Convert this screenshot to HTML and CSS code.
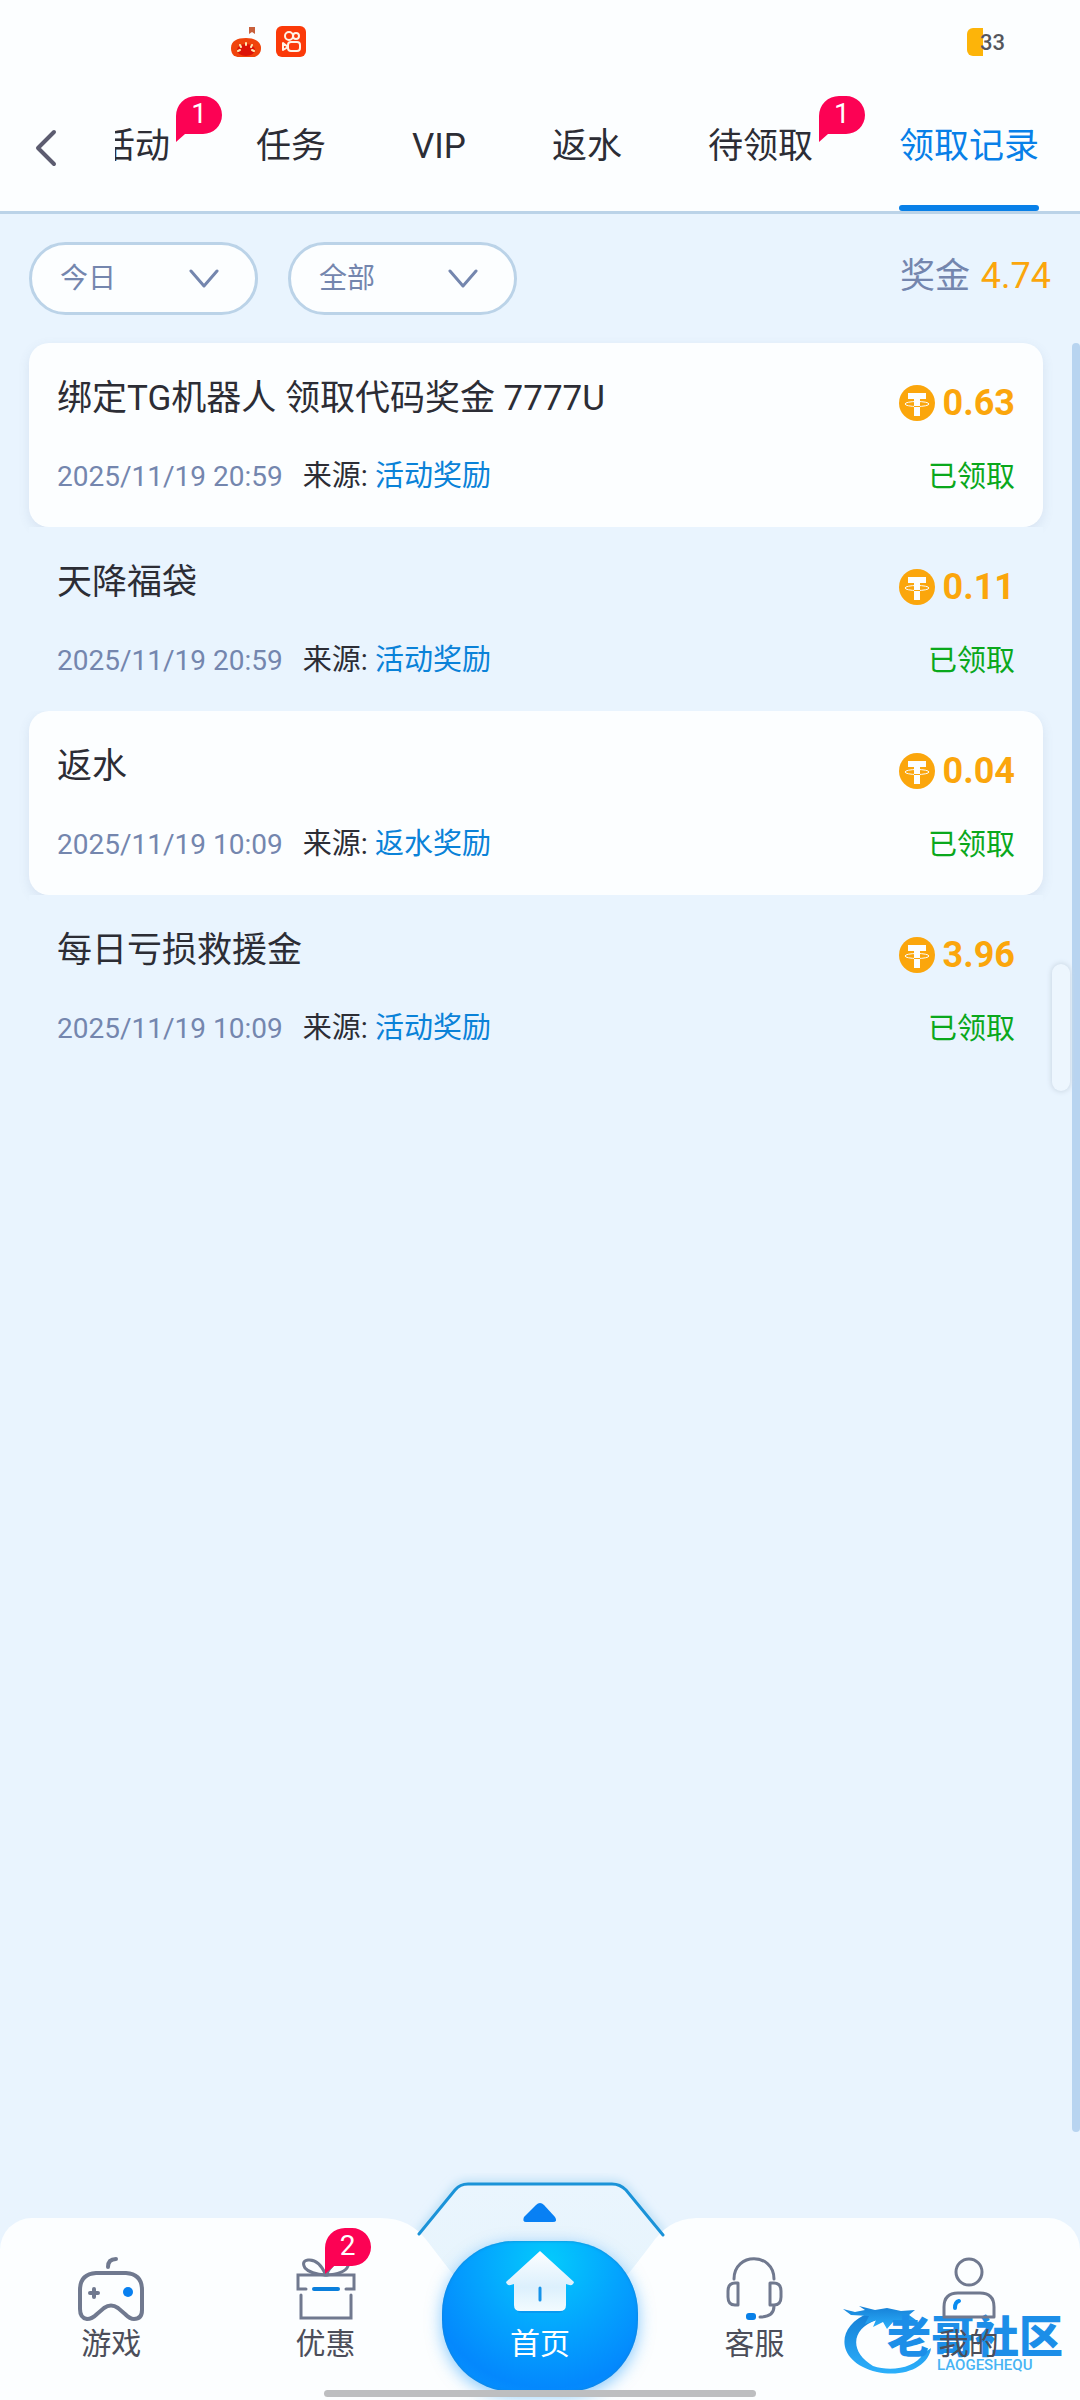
FILE: index.html
```html
<!DOCTYPE html>
<html lang="zh-CN">
<head>
<meta charset="utf-8">
<meta name="viewport" content="width=device-width, initial-scale=1">
<title>领取记录</title>
<link rel="stylesheet" href="styles.css">
</head>
<body>
<svg class="defs" width="0" height="0" aria-hidden="true">
  <symbol id="coin" viewBox="0 0 36 36">
    <circle cx="18" cy="18" r="18" fill="#fba60c"/>
    <path d="M9 8h18v6h-6v17h-6V14H9z" fill="#fcfeff"/>
    <ellipse cx="18" cy="19" rx="12" ry="2.500" fill="none" stroke="#fcfeff" stroke-width="1"/>
    <path d="M15 21.500h6" stroke="#fba60c" stroke-width="1"/>
  </symbol>
  <symbol id="chevron" viewBox="0 0 30 20">
    <path d="M2 2l13 15L28 2" fill="none" stroke="#7486ae" stroke-width="3" stroke-linecap="round" stroke-linejoin="round"/>
  </symbol>
  <symbol id="bubble" viewBox="0 0 46 46">
    <path d="M0 46V20A20 20 0 0 1 20 0h7a19 19 0 0 1 0 38H9z" fill="#fc0254"/>
  </symbol>
</svg>

<header class="header">
  <div class="status">
    <div class="status-apps">
      <svg width="30" height="32" viewBox="0 0 30 32" aria-hidden="true">
        <path d="M18 1h6v7l-3-2-3 2z" fill="#c8603c"/>
        <path d="M15 12c9 0 15 4 15 10s-4 9-8 9H8c-4 0-8-2-8-9s6-10 15-10z" fill="#f0440c"/>
        <ellipse cx="15" cy="24" rx="9" ry="6" fill="#dc1408"/>
        <path d="M15 17v2M9 19l1 2M21 19l-1 2M7 25l2-1M23 25l-2-1" stroke="#ffe9b0" stroke-width="2" stroke-linecap="round"/>
      </svg>
      <svg width="30" height="32" viewBox="0 0 30 32" aria-hidden="true">
        <rect width="30" height="31" rx="6" fill="#fb3a09"/>
        <g fill="none" stroke="#fff3e6" stroke-width="2" stroke-linejoin="round">
          <circle cx="13" cy="10" r="4"/><circle cx="20" cy="10" r="3"/>
          <rect x="12" y="16" width="12" height="9" rx="3"/><path d="M7 17v7l5-3z"/>
        </g>
      </svg>
    </div>
    <div class="battery"><span class="battery-level"></span><span class="battery-text">33</span></div>
  </div>
  <div class="topbar">
    <button class="back" aria-label="返回">
      <svg width="22" height="38" viewBox="0 0 22 38"><path d="M19 3L3 19l16 16" fill="none" stroke="#5c5c70" stroke-width="4" stroke-linecap="round" stroke-linejoin="round"/></svg>
    </button>
    <nav class="tabs">
      <a class="tab" href="#activity">活动<span class="badge"><svg><use href="#bubble"/></svg><b>1</b></span></a>
      <a class="tab" href="#task">任务</a>
      <a class="tab" href="#vip">VIP</a>
      <a class="tab" href="#rebate">返水</a>
      <a class="tab" href="#pending">待领取<span class="badge"><svg><use href="#bubble"/></svg><b>1</b></span></a>
      <a class="tab tab-active" href="#records" aria-current="page">领取记录</a>
    </nav>
  </div>
</header>

<main class="main">
  <div class="filters">
    <div class="select">
      <select aria-label="日期"><option>今日</option></select>
      <svg><use href="#chevron"/></svg>
    </div>
    <div class="select">
      <select aria-label="类型"><option>全部</option></select>
      <svg><use href="#chevron"/></svg>
    </div>
    <p class="total">奖金 <span>4.74</span></p>
  </div>

  <div class="scroller">
    <ul class="records">
      <li class="record">
        <div class="row"><h2>绑定TG机器人 领取代码奖金 7777U</h2><span class="amount"><svg><use href="#coin"/></svg>0.63</span></div>
        <div class="row meta"><p><time>2025/11/19 20:59</time><span>来源: <em>活动奖励</em></span></p><span class="state">已领取</span></div>
      </li>
      <li class="record">
        <div class="row"><h2>天降福袋</h2><span class="amount"><svg><use href="#coin"/></svg>0.11</span></div>
        <div class="row meta"><p><time>2025/11/19 20:59</time><span>来源: <em>活动奖励</em></span></p><span class="state">已领取</span></div>
      </li>
      <li class="record">
        <div class="row"><h2>返水</h2><span class="amount"><svg><use href="#coin"/></svg>0.04</span></div>
        <div class="row meta"><p><time>2025/11/19 10:09</time><span>来源: <em>返水奖励</em></span></p><span class="state">已领取</span></div>
      </li>
      <li class="record">
        <div class="row"><h2>每日亏损救援金</h2><span class="amount"><svg><use href="#coin"/></svg>3.96</span></div>
        <div class="row meta"><p><time>2025/11/19 10:09</time><span>来源: <em>活动奖励</em></span></p><span class="state">已领取</span></div>
      </li>
    </ul>
    <div class="scrollbar"></div>
    <div class="handle"></div>
  </div>
</main>

<footer class="footer">
  <div class="dock-bg" aria-hidden="true">
    <div class="dock-side dock-left"></div>
    <svg class="dock-notch" width="320" height="220" viewBox="0 0 320 220">
      <defs>
        <linearGradient id="hex" x1="0" y1="0" x2="0" y2="1"><stop offset="0" stop-color="#eaf5fe"/><stop offset="1" stop-color="#e5f4fb"/></linearGradient>
        <filter id="glow" x="-20%" y="-20%" width="140%" height="140%"><feGaussianBlur stdDeviation="5"/></filter>
      </defs>
      <path d="M39 55L75 10Q80 4 88 4H232Q240 4 246 10L283 55" fill="none" stroke="#b5dcf4" stroke-width="7" filter="url(#glow)"/>
      <path d="M39 55L75 10Q80 4 88 4H232Q240 4 246 10L283 55V160H39z" fill="url(#hex)"/>
      <path d="M0 38C22 38 36 46 48 62L68 88Q100 130 160 130T253 88L273 62C285 46 298 38 320 38V220H0z" fill="#fcfeff"/>
      <path d="M39 54L75 10Q80 4 88 4H232Q240 4 246 10L283 55" fill="none" stroke="#1b93d8" stroke-width="3" stroke-linecap="round"/>
      <path d="M144 37L156 25Q160 21 164 25L175 37Q178 42 173 42H146Q142 42 144 37z" fill="#0880f4"/>
    </svg>
    <div class="dock-side dock-right"></div>
  </div>
  <div class="watermark">
    <svg width="92" height="76" viewBox="0 0 92 76" aria-hidden="true">
      <defs><linearGradient id="drg" x1="0" y1="0" x2="0" y2="1"><stop offset="0" stop-color="#157fd6"/><stop offset="1" stop-color="#2cb0fb"/></linearGradient></defs>
      <path d="M26 13C-8 26-8 62 34 72C62 78 86 66 88 48L80 54C72 68 48 72 30 66C6 52 8 28 34 20z" fill="url(#drg)"/>
      <path d="M0 9L12 12L22 10L16 6L32 10L44 8L58 11L72 10L66 15L73 20L58 20L62 25L50 22L44 29L40 22L30 27L33 20L22 24L26 16L8 15z" fill="url(#drg)"/>
    </svg>
    <div class="watermark-text"><strong>老哥社区</strong><small>LAOGESHEQU</small></div>
  </div>
  <nav class="dock">
    <a class="dock-item" href="#games">
      <svg width="68" height="66" viewBox="0 0 68 66" fill="none" stroke="#70798f" stroke-width="4" stroke-linecap="round" stroke-linejoin="round">
        <path d="M31 11Q31 3 39 3"/>
        <path d="M19 17H49Q65 18 65 34V54Q65 63 57 63Q53 63 48 58L41 52Q34 47 27 52L20 58Q15 63 10 63Q3 62 3 53V34Q3 18 19 17z"/>
        <path d="M13 37h8M17 33v8"/><circle cx="51" cy="36" r="5" fill="#0880f0" stroke="none"/>
      </svg>
      <span>游戏</span>
    </a>
    <a class="dock-item" href="#promos">
      <svg width="68" height="66" viewBox="0 0 68 66" fill="none" stroke="#70798f" stroke-width="3">
        <path d="M34 19C30 10 24 3 16 4Q9 5 13 12Q18 18 34 19zM34 19Q53 18 56 10Q57 5 52 4Q42 3 34 19z"/>
        <path d="M14 33H6V19H62V33H54M9 39V62H59V39" stroke-linecap="round"/>
        <path d="M22 33H46" stroke="#0a7fdc" stroke-width="4" stroke-linecap="round"/>
      </svg>
      <span>优惠</span>
      <span class="badge dock-badge"><svg><use href="#bubble"/></svg><b>2</b></span>
    </a>
    <a class="dock-home" href="#home">
      <svg width="72" height="68" viewBox="0 0 72 68">
        <defs><linearGradient id="house" x1="0" y1="0" x2="0" y2="1"><stop offset="0" stop-color="#fcfeff"/><stop offset=".6" stop-color="#dcf0fd"/><stop offset="1" stop-color="#f2fbff"/></linearGradient></defs>
        <path d="M11 36V56Q11 65 18 65H54Q61 65 61 56V36z" fill="#0a7ae0" opacity=".4"/>
        <path d="M36 3L70 34Q69 39 62 36V57Q62 63 56 63H16Q10 63 10 57V36Q3 39 2 34z" fill="url(#house)"/>
        <path d="M36 40v12" stroke="#1593ea" stroke-width="3" stroke-linecap="round"/>
      </svg>
      <span>首页</span>
    </a>
    <a class="dock-item" href="#support">
      <svg width="68" height="66" viewBox="0 0 68 66" fill="none" stroke="#70798f" stroke-width="3" stroke-linecap="round" stroke-linejoin="round">
        <path d="M14 23C14 -4 54 -4 54 23"/>
        <path d="M18 27V49H15Q8 49 8 41V35Q8 27 15 27zM50 27V49H54Q61 49 61 41V35Q61 27 54 27z"/>
        <path d="M54 50Q54 61 40 61"/><rect x="26" y="57" width="10" height="7" rx="3" fill="#0880e8" stroke="none"/>
      </svg>
      <span>客服</span>
    </a>
    <a class="dock-item" href="#mine">
      <svg width="68" height="66" viewBox="0 0 68 66" fill="none" stroke="#70798f" stroke-width="3" stroke-linecap="round" stroke-linejoin="round">
        <circle cx="34" cy="16" r="13"/>
        <path d="M23 37H45Q59 37 59 51V61H9V51Q9 37 23 37z"/>
        <path d="M20 52Q20 46 24 45" stroke="#0a8cf0" stroke-width="4"/>
      </svg>
      <span>我的</span>
    </a>
  </nav>
  <div class="home-indicator"></div>
</footer>
</body>
</html>
```
FILE: styles.css
```css
* { box-sizing: border-box; }

body {
  margin: 0;
  min-height: 100vh;
  display: flex;
  flex-direction: column;
  background: #e9f4fe;
  color: #2c2d35;
  font-family: Roboto, "Noto Sans CJK SC", sans-serif;
  font-size: 28px;
  font-weight: 400;
}

h2, p, ul { margin: 0; padding: 0; font-weight: 400; }
ul { list-style: none; }
a { color: inherit; text-decoration: none; }
em { font-style: normal; }
.defs { position: absolute; }

/* Header */
.header {
  background: #fcfeff;
  border-bottom: 3px solid #bbd3e8;
}
.status {
  display: flex;
  justify-content: space-between;
  align-items: center;
  height: 84px;
  padding: 0 75px 0 231px;
}
.status-apps { display: flex; gap: 15px; }
.battery { display: flex; align-items: center; }
.battery-level {
  width: 16px;
  height: 28px;
  border-radius: 6px 0 0 6px;
  background: #fdb409;
}
.battery-text {
  margin-left: -3px;
  color: #55565c;
  font-size: 22px;
  font-weight: 500;
}
.topbar { display: flex; height: 127px; }
.back {
  width: 115px;
  padding: 0 0 0 35px;
  border: 0;
  background: none;
  text-align: left;
  flex: none;
}
.back svg { vertical-align: middle; }
.tabs {
  flex: 1;
  min-width: 0;
  display: flex;
  justify-content: flex-end;
  gap: 86px;
  padding-right: 41px;
  overflow: hidden;
}
.tab {
  position: relative;
  flex: none;
  padding-top: 4px;
  font-size: 35px;
  line-height: 117px;
}
.tab-active { color: #0880e8; }
.tab-active::after {
  content: "";
  display: block;
  height: 6px;
  border-radius: 3px;
  background: #0880e8;
}
.badge {
  position: absolute;
  top: 12px;
  left: 100%;
  width: 46px;
  height: 46px;
  margin-left: 6px;
  color: #fff;
  font-size: 28px;
  line-height: 36px;
  text-align: center;
}
.badge svg { position: absolute; left: 0; top: 0; width: 46px; height: 46px; }
.badge b { position: relative; font-weight: 400; }

/* Filters */
.main { flex: 1; display: flex; flex-direction: column; }
.filters {
  display: flex;
  align-items: center;
  gap: 30px;
  padding: 28px 29px;
}
.select { position: relative; width: 229px; }
.select select {
  display: block;
  width: 100%;
  height: 73px;
  padding: 0 28px;
  border: 3px solid #bbd3e8;
  border-radius: 37px;
  background: #fcfeff;
  color: #7486ae;
  font: inherit;
  appearance: none;
}
.select svg {
  position: absolute;
  right: 39px;
  top: 27px;
  width: 30px;
  height: 20px;
  pointer-events: none;
}
.total {
  margin-left: auto;
  padding-bottom: 4px;
  color: #7486ae;
  font-size: 35px;
  line-height: 50px;
}
.total span { margin-left: 2px; color: #fba60c; font-size: 36px; }

/* Records */
.scroller { flex: 1; display: flex; position: relative; }
.records { flex: 1; padding: 0 29px; }
.record { padding: 30px 28px 0; height: 184px; border-radius: 20px; }
.record:nth-child(odd) {
  background: #fcfeff;
  box-shadow: 0 4px 12px rgba(80, 110, 150, .12);
}
.record:nth-child(even) { position: relative; background: #e9f4fe; border-radius: 0; }
.row { display: flex; justify-content: space-between; align-items: center; }
.row h2 { font-size: 35px; line-height: 52px; }
.meta { margin-top: 30px; font-size: 29px; line-height: 42px; }
.meta time { margin-right: 20px; color: #7486ae; font-size: 28px; }
.meta em { color: #0a82d8; }
.state { color: #0aa81c; }
.amount {
  display: flex;
  align-items: center;
  gap: 8px;
  margin-top: 8px;
  color: #fba60c;
  font-size: 36px;
  font-weight: 700;
  line-height: 44px;
}
.amount svg { width: 36px; height: 36px; }
.scrollbar { width: 8px; border-radius: 4px; background: #b8d4f0; }
.handle {
  position: absolute;
  right: 10px;
  top: 621px;
  width: 18px;
  height: 127px;
  border-radius: 9px;
  background: #edf6fe;
  box-shadow: 0 0 5px 1px #ccd9e6;
}

/* Bottom dock */
.footer { position: relative; padding-top: 49px; }
.dock-bg {
  position: absolute;
  inset: 48px 0 0;
  display: flex;
}
.dock-side { flex: 1; margin-top: 38px; background: #fcfeff; }
.dock-left { border-radius: 32px 0 0 0; }
.dock-right { border-radius: 0 32px 0 0; }
.dock-notch { flex: none; overflow: visible; }
.dock {
  position: relative;
  display: grid;
  grid-template-columns: repeat(5, 1fr);
  justify-items: center;
  height: 219px;
  padding: 60px 4px 0;
}
.dock-item, .dock-home {
  display: flex;
  flex-direction: column;
  align-items: center;
  color: #4c4e5a;
  font-size: 30px;
  line-height: 40px;
}
.dock-item { position: relative; padding-top: 15px; gap: 2px; }
.dock-item span { white-space: nowrap; }
.dock-badge { top: -13px; left: 33px; margin: 0; }
.dock-home {
  width: 196px;
  height: 151px;
  padding-top: 7px;
  gap: 8px;
  border-radius: 72px;
  background: radial-gradient(circle at 54% 14%, #04cbfc 0, #04a4fe 42%, #0488fd 75%, #0a9cfe 100%);
  box-shadow: 0 4px 16px rgba(20, 150, 250, .5), inset 0 0 3px #1480d0;
  color: #fff;
}
.home-indicator {
  position: absolute;
  left: 30%;
  right: 30%;
  bottom: 3px;
  height: 7px;
  border-radius: 4px;
  background: #bdbec0;
}
.watermark {
  position: absolute;
  right: 17px;
  bottom: 24px;
  display: flex;
}
.watermark-text { margin-left: -48px; padding-top: 18px; color: #1c8ee8; }
.watermark strong {
  display: block;
  font-size: 44px;
  font-weight: 900;
  line-height: 40px;
}
.watermark small {
  display: block;
  padding-left: 50px;
  color: #48b4f4;
  font-size: 15px;
  font-weight: 500;
  line-height: 15px;
}
```
